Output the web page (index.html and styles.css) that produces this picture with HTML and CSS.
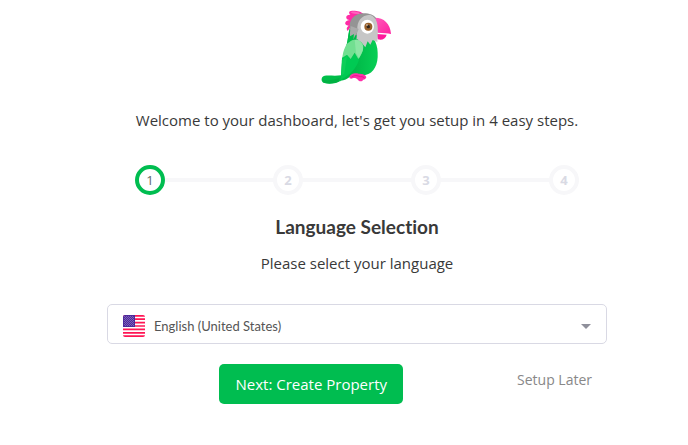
FILE: index.html
```html
<!DOCTYPE html>
<html lang="en">
<head>
    <meta charset="UTF-8">
    <meta name="viewport" content="width=device-width, initial-scale=1.0">
    <title>Setup</title>
    <link rel="stylesheet" href="styles.css">
</head>
<body>
    <main class="setup">
        <svg class="logo" viewBox="6 0 240 255" role="img" aria-label="Parrot">
            <defs>
                <linearGradient id="body" x1="0" y1="0" x2="1" y2="0">
                    <stop offset="0" stop-color="#00c04a"/>
                    <stop offset="0.6" stop-color="#00b948"/>
                    <stop offset="1" stop-color="#08cf55"/>
                </linearGradient>
                <linearGradient id="beak" x1="0" y1="0" x2="1" y2="1">
                    <stop offset="0" stop-color="#ff5cba"/>
                    <stop offset="1" stop-color="#ff1fa0"/>
                </linearGradient>
            </defs>
            <!-- crest -->
            <path fill="#ff2ba6" d="M145 27C139 17 108 14 103 20C101 25 104 29 109 30C97 28 91 34 95 41C98 44 102 45 106 45C95 45 89 51 91 57C93 60 97 62 101 62C95 66 93 73 98 78L113 58Z"/>
            <path fill="#ff62bd" d="M135 24C123 19 111 18 107 22C112 27 123 26 132 28Z"/>
            <!-- body and tail -->
            <path fill="url(#body)" d="M105 68C99 82 101 101 93 125C82 149 80 179 78 211C62 213 44 211 29 212C17 215 18 229 25 233C43 239 65 235 77 227C88 227 97 221 104 216C122 209 137 210 151 210C177 204 190 178 188 143C188 127 183 111 175 98L120 75Z"/>
            <path fill="#00b143" d="M22 223C38 229 57 223 74 219L70 230C53 237 34 236 25 232Z"/>
            <path fill="#00ca53" d="M81 158L97 145L106 163L120 145L132 164C126 187 104 211 80 222L75 230L79 211Z"/>
            <path fill="#21d565" d="M80 166L96 153L88 206L79 212Z" opacity=".4"/>
            <!-- beak -->
            <path fill="#ff179b" d="M185 87L215 89C211 103 201 106 188 103Z"/>
            <path fill="url(#beak)" d="M180 38C206 38 226 55 228 87C218 84 206 85 187 83Z"/>
            <!-- head -->
            <path fill="#949494" d="M105 73C99 46 117 25 146 25C164 25 177 31 183 39L151 103L116 87Z"/>
            <path fill="#c6c6c6" d="M127 76C125 47 139 31 165 29C188 38 190 62 188 91L187 111L173 105L166 119L158 109L151 127L137 110L123 116Z"/>
            <path fill="#aaaaaa" d="M131 72C127 83 119 93 116 102L104 92L107 63Z"/>
            <path fill="#00bd49" d="M105 71L105 94L117 87L115 105L130 103L107 125L94 127C98 111 99 87 105 71Z"/>
            <!-- wing -->
            <path fill="#72df91" d="M96 151C91 132 96 110 113 105C128 101 145 109 145 126C145 139 138 151 130 162L119 143L107 162L96 149L82 158C84 141 90 121 101 112Z"/>
            <path fill="#9ae9af" d="M119 104C141 104 147 124 143 137L132 160L123 144Z" opacity=".65"/>
            <!-- eye -->
            <ellipse fill="#fff" cx="157" cy="65" rx="20" ry="21"/>
            <circle fill="#98602b" cx="160" cy="65" r="12"/>
            <circle fill="#30251d" cx="160" cy="65" r="5"/>
            <circle fill="#fff" cx="156" cy="60" r="2"/>
            <!-- feet -->
            <path fill="#ff30aa" d="M103 217C105 206 121 202 131 206C141 206 152 208 154 217C152 223 147 225 144 224C143 230 133 231 129 225C125 219 117 218 113 220C109 223 103 221 103 217Z"/>
            <path fill="none" stroke="#dd087e" stroke-width="2" d="M110 217C117 209 128 212 136 215C143 214 147 217 149 220"/>
        </svg>

        <p class="text">Welcome to your dashboard, let's get you setup in 4 easy steps.</p>

        <ol class="steps">
            <li class="step active">1</li>
            <li class="step">2</li>
            <li class="step">3</li>
            <li class="step">4</li>
        </ol>

        <h1 class="title">Language Selection</h1>
        <label class="text" for="language">Please select your language</label>

        <div class="language">
            <svg class="flag" viewBox="0 0 22 22" aria-hidden="true">
                <defs>
                    <clipPath id="flag-shape"><rect width="22" height="22" rx="2"/></clipPath>
                    <pattern id="stars" width="2" height="2" patternUnits="userSpaceOnUse">
                        <rect width="2" height="2" fill="#4c2a9c"/>
                        <path fill="#7d60b8" d="M0 0h1v1h-1zM1 1h1v1h-1z"/>
                    </pattern>
                </defs>
                <g clip-path="url(#flag-shape)">
                    <rect width="22" height="22" fill="#fff"/>
                    <path stroke="#ff1654" stroke-width="1.7" d="M0 .8h22M0 4.2h22M0 7.6h22M0 11h22M0 14.4h22M0 17.8h22M0 21.2h22"/>
                    <rect width="12" height="12" fill="#4c2a9c"/>
                    <rect x="1" y="1" width="10" height="10" fill="url(#stars)"/>
                </g>
            </svg>
            <select class="language-select" id="language">
                <option>English (United States)</option>
            </select>
            <svg class="arrow" viewBox="0 0 10 5" aria-hidden="true">
                <path fill="#8f909b" d="M0 0h10L5 5z"/>
            </svg>
        </div>

        <div class="actions">
            <button class="next" type="button">Next: Create Property</button>
            <a class="later" href="#">Setup Later</a>
        </div>
    </main>
</body>
</html>
```
FILE: styles.css
```css
*,
*:before,
*:after {
    box-sizing: border-box;
}
body {
    margin: 0;
    padding: 5px 0 20px 26px;
    background-color: white;
    color: #393939;
    font-family: "Open Sans", sans-serif;
    font-size: 15px;
    line-height: 20px;
}
.setup {
    max-width: 500px;
    margin: 0 auto;
    text-align: center;
}
.logo {
    display: block;
    width: 80px;
    height: 85px;
    margin: 0 auto 20px;
}
.text {
    display: block;
    margin: 0;
}
.steps {
    display: flex;
    justify-content: space-between;
    margin: 35px 28px 20px;
    padding: 0;
    list-style: none;
    background: linear-gradient(#f7f7f9, #f7f7f9) center / 100% 4px no-repeat;
}
.step {
    width: 30px;
    height: 30px;
    border: 4px solid #f7f7f9;
    border-radius: 50%;
    background-color: white;
    color: #d9dae4;
    font-size: 13px;
    font-weight: bold;
    line-height: 22px;
}
.step.active {
    border-color: #00bd50;
    color: #666;
    font-weight: normal;
}
.title {
    margin: 0 0 14px;
    font-family: Lato, sans-serif;
    font-size: 19px;
    font-weight: bold;
    font-variant-ligatures: none;
    line-height: 24px;
}
.language {
    display: grid;
    align-items: center;
    margin: 31px 0 20px;
}
.flag,
.arrow,
.language-select {
    grid-area: 1 / 1;
}
.flag,
.arrow {
    z-index: 1;
    margin-top: 4px;
    pointer-events: none;
}
.flag {
    width: 22px;
    height: 22px;
    margin-left: 16px;
}
.arrow {
    justify-self: end;
    width: 10px;
    height: 5px;
    margin-right: 16px;
}
.language-select {
    width: 100%;
    height: 40px;
    padding: 4px 48px 0 46px;
    border: 1px solid #d9d9e4;
    border-radius: 5px;
    background-color: white;
    color: #555;
    font-family: Lato, sans-serif;
    font-size: 13px;
    font-variant-ligatures: none;
    appearance: none;
}
.actions {
    display: flex;
    justify-content: flex-end;
    align-items: flex-start;
    gap: 114px;
    padding-right: 15px;
}
.next {
    height: 40px;
    padding: 0 16px;
    border: 0;
    border-radius: 5px;
    background-color: #00bd50;
    color: white;
    font-family: inherit;
    font-size: 15px;
}
.later {
    margin-top: 6px;
    color: #888;
    font-size: 14px;
    text-decoration: none;
}
```
